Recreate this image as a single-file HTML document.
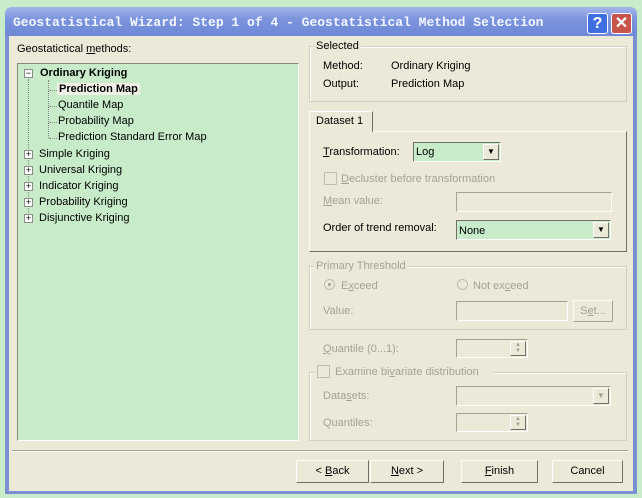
<!DOCTYPE html>
<html><head><style>
*{margin:0;padding:0;box-sizing:border-box}
body{width:642px;height:498px;background:#c9eccb;position:relative;overflow:hidden;font-family:"Liberation Sans",Tahoma,sans-serif;font-size:11px;color:#000}
.abs{position:absolute}
#win{left:5px;top:7px;width:632px;height:487px;background:#7b8fd3;border-radius:7px 7px 0 0}
#title{left:5px;top:7px;width:632px;height:29px;border-radius:7px 7px 0 0;background:linear-gradient(#a5b6ea,#7d95dd 40%,#6f88d6)}
#title span{position:absolute;left:8px;top:8px;font-family:"Liberation Mono",monospace;font-weight:bold;font-size:13px;color:#f4f6ff;letter-spacing:0px}
#body{left:9px;top:36px;width:624px;height:455px;background:#ece9d8}
.tb{top:13px;width:21px;height:21px;border:1px solid #fff;border-radius:3px;color:#fff;font-weight:bold;font-size:16px;text-align:center;line-height:19px}
#tree{left:17px;top:63px;width:282px;height:378px;background:#c8ecc9;border:1px solid;border-color:#8a8778 #fff #fff #8a8778}
.t{position:absolute;white-space:nowrap}
.grp{border:1px solid #d0cfc0;box-shadow:1px 1px 0 #fff inset}
.lg{position:absolute;background:#ece9d8;padding:0 2px;top:-7px;left:5px}
.dis{color:#a5a291}
.inp{position:absolute;border:1px solid;border-color:#a5a291 #fff #fff #a5a291;background:#ece9d8}
.btn{position:absolute;top:460px;height:23px;border:1px solid;border-color:#fff #716f64 #716f64 #fff;text-align:center;line-height:21px;font-size:11px;background:#ece9d8}
.pm{position:absolute;width:9px;height:9px;border:1px solid #8a8a8a;background:#fff;font-size:9px;line-height:6px;text-align:center;color:#000}
.dots{position:absolute;border-left:1px dotted #888}
.hd{position:absolute;border-top:1px dotted #888;width:8px}
.dd{position:absolute;width:16px;height:16px;border:1px solid;border-color:#fff #716f64 #716f64 #fff;background:#ece9d8;font-size:8px;text-align:center;line-height:14px}
u{text-decoration:underline}
</style></head><body>
<div id="win" class="abs"></div>
<div id="title" class="abs"><span>Geostatistical Wizard: Step 1 of 4 - Geostatistical Method Selection</span></div>
<div class="abs tb" style="left:587px;background:#3e6ee0">?</div>
<div class="abs tb" style="left:611px;background:#c7544a">✕</div>
<div id="body" class="abs"></div>

<div class="t" style="left:17px;top:43px">Geostatictical <u>m</u>ethods:</div>
<div id="tree" class="abs"></div>
<div class="dots" style="left:28px;top:79px;height:140px"></div>
<div class="dots" style="left:48px;top:80px;height:58px"></div>
<div class="hd" style="left:49px;top:90px"></div>
<div class="hd" style="left:49px;top:106px"></div>
<div class="hd" style="left:49px;top:122px"></div>
<div class="hd" style="left:49px;top:138px"></div>
<div class="pm" style="left:24px;top:69px">−</div>
<div class="pm" style="left:24px;top:150px">+</div>
<div class="pm" style="left:24px;top:166px">+</div>
<div class="pm" style="left:24px;top:182px">+</div>
<div class="pm" style="left:24px;top:198px">+</div>
<div class="pm" style="left:24px;top:214px">+</div>
<div class="t" style="left:40px;top:67px;font-weight:bold">Ordinary Kriging</div>
<div class="t" style="left:57px;top:83px;font-weight:bold;background:#f0f0e8;padding:0 2px">Prediction Map</div>
<div class="t" style="left:58px;top:99px">Quantile Map</div>
<div class="t" style="left:58px;top:115px">Probability Map</div>
<div class="t" style="left:58px;top:131px">Prediction Standard Error Map</div>
<div class="t" style="left:39px;top:148px">Simple Kriging</div>
<div class="t" style="left:39px;top:164px">Universal Kriging</div>
<div class="t" style="left:39px;top:180px">Indicator Kriging</div>
<div class="t" style="left:39px;top:196px">Probability Kriging</div>
<div class="t" style="left:39px;top:212px">Disjunctive Kriging</div>

<div class="abs grp" style="left:309px;top:46px;width:318px;height:56px"><span class="lg" style="left:4px;top:-7px">Selected</span></div>
<div class="t" style="left:323px;top:60px">Method:</div>
<div class="t" style="left:391px;top:60px">Ordinary Kriging</div>
<div class="t" style="left:323px;top:78px">Output:</div>
<div class="t" style="left:391px;top:78px">Prediction Map</div>

<div class="abs" style="left:309px;top:131px;width:318px;height:121px;border:1px solid;border-color:#fff #716f64 #716f64 #fff"></div>
<div class="abs" style="left:309px;top:111px;width:64px;height:21px;border:1px solid;border-color:#fff #716f64 transparent #fff;background:#ece9d8;border-bottom:none"></div>
<div class="t" style="left:316px;top:115px">Dataset 1</div>
<div class="t" style="left:323px;top:146px"><u>T</u>ransformation:</div>
<div class="inp" style="left:413px;top:142px;width:88px;height:20px;background:#c8ecc9;border-color:#716f64 #fff #fff #716f64"><span style="position:absolute;left:2px;top:3px">Log</span><div class="dd" style="right:1px;top:1px">▼</div></div>
<div class="abs" style="left:324px;top:172px;width:13px;height:13px;border:1px solid #c0bdad;background:#ece9d8"></div>
<div class="t dis" style="left:341px;top:173px"><u>D</u>ecluster before transformation</div>
<div class="t dis" style="left:323px;top:195px"><u>M</u>ean value:</div>
<div class="inp" style="left:456px;top:192px;width:156px;height:20px"></div>
<div class="t" style="left:323px;top:222px">Order of trend removal:</div>
<div class="inp" style="left:456px;top:220px;width:155px;height:20px;background:#c8ecc9;border-color:#716f64 #fff #fff #716f64"><span style="position:absolute;left:2px;top:4px">None</span><div class="dd" style="right:1px;top:1px">▼</div></div>

<div class="abs grp" style="left:309px;top:266px;width:318px;height:64px"><span class="lg dis" style="left:4px">Primary Threshold</span></div>
<div class="abs" style="left:324px;top:279px;width:11px;height:11px;border:1px solid #c0bdad;border-radius:50%;background:#ece9d8"><div style="width:3px;height:3px;background:#a5a291;border-radius:50%;margin:3px"></div></div>
<div class="t dis" style="left:341px;top:280px">E<u>x</u>ceed</div>
<div class="abs" style="left:457px;top:279px;width:11px;height:11px;border:1px solid #c0bdad;border-radius:50%"></div>
<div class="t dis" style="left:473px;top:280px">Not ex<u>c</u>eed</div>
<div class="t dis" style="left:323px;top:305px">Value:</div>
<div class="inp" style="left:456px;top:301px;width:112px;height:20px"></div>
<div class="abs" style="left:573px;top:300px;width:40px;height:22px;border:1px solid;border-color:#fff #a5a291 #a5a291 #fff;color:#a5a291;text-align:center;line-height:20px">S<u>e</u>t...</div>

<div class="t dis" style="left:323px;top:343px"><u>Q</u>uantile (0...1):</div>
<div class="inp" style="left:456px;top:339px;width:72px;height:19px"><div class="dd" style="right:1px;top:1px;height:15px;font-size:6px;line-height:6px;color:#a5a291">▲<br>▼</div></div>

<div class="abs grp" style="left:309px;top:372px;width:318px;height:69px"></div>
<div class="abs" style="left:315px;top:365px;width:177px;height:14px;background:#ece9d8"></div>
<div class="abs" style="left:317px;top:365px;width:13px;height:13px;border:1px solid #c0bdad;background:#ece9d8"></div>
<div class="t dis" style="left:335px;top:366px">Examine bi<u>v</u>ariate distribution</div>
<div class="t dis" style="left:323px;top:390px">Data<u>s</u>ets:</div>
<div class="inp" style="left:456px;top:386px;width:155px;height:20px"><div class="dd" style="right:1px;top:1px;color:#a5a291">▼</div></div>
<div class="t dis" style="left:323px;top:417px">Quantiles:</div>
<div class="inp" style="left:456px;top:413px;width:72px;height:19px"><div class="dd" style="right:1px;top:1px;height:15px;font-size:6px;line-height:6px;color:#a5a291">▲<br>▼</div></div>

<div class="abs" style="left:12px;top:450px;width:616px;height:2px;border-top:1px solid #a5a291;border-bottom:1px solid #fff"></div>
<div class="btn" style="left:296px;width:73px">&lt; <u>B</u>ack</div>
<div class="btn" style="left:370px;width:74px"><u>N</u>ext &gt;</div>
<div class="btn" style="left:461px;width:77px"><u>F</u>inish</div>
<div class="btn" style="left:552px;width:71px">Cancel</div>
</body></html>
